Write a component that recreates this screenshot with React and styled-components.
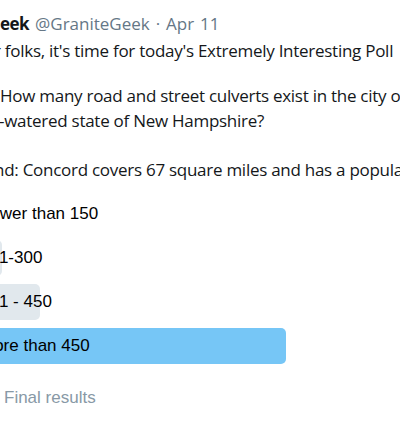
import React from "react";
import styled, { createGlobalStyle } from "styled-components";

const GlobalStyle = createGlobalStyle`
  html, body { margin: 0; padding: 0; background: #ffffff; }
  body { overflow: hidden; }
`;

const Frame = styled.div`
  width: 400px;
  height: 430px;
  overflow: hidden;
  background: #ffffff;
`;

const Tweet = styled.article`
  padding-top: 12px;
  font-family: "Open Sans", "Noto Sans", sans-serif;
  font-size: 17px;
  line-height: 24.5px;
  color: #14171a;
`;

const Line = styled.div`
  display: flex;
  white-space: nowrap;
  margin-left: ${(p) => p.$at}px;
`;

const Hidden = styled.span`
  flex: none;
  width: 200px;
  margin-left: -200px;
  text-align: right;
`;

const Header = styled(Line)`
  margin-bottom: 2.5px;
`;

const Name = styled.span`
  font-weight: 700;
  letter-spacing: -0.5px;
  color: #14171a;
`;

const Meta = styled.span`
  color: #657786;
  white-space: pre;
  word-spacing: 1.5px;
`;

const Body = styled.div`
  letter-spacing: -0.27px;
`;

const Para = styled.div`
  margin-bottom: ${(p) => p.$gap ?? 24.5}px;
  &:last-child { margin-bottom: 0; }
`;

const Poll = styled.div`
  margin-top: 14px;
  margin-left: -40px;
  width: 448px;
  font-family: "Liberation Sans", Arial, sans-serif;
  font-size: 17px;
  color: #000000;
  display: flex;
  flex-direction: column;
  gap: 8px;
`;

const Option = styled.div`
  position: relative;
  height: 36px;
  line-height: 36px;
  padding-left: 20px;
  white-space: nowrap;
`;

const Bar = styled.div`
  position: absolute;
  left: 0;
  top: 0;
  bottom: 0;
  border-radius: 5px;
  background: ${(p) => (p.$winner ? "#76c6f6" : "#e1e8ed")};
`;

const Label = styled.span`
  position: relative;
`;

const Footer = styled.div`
  margin-top: 24px;
  margin-left: 4px;
  font-family: "Liberation Sans", Arial, sans-serif;
  font-size: 17px;
  line-height: 20px;
  color: #8899a6;
`;

const options = [
  { label: "Fewer than 150", pct: 0 },
  { label: "151-300", pct: 9.4 },
  { label: "301 - 450", pct: 17.8 },
  { label: "More than 450", pct: 72.8, winner: true },
];

export default function App() {
  return (
    <Frame>
      <GlobalStyle />
      <Tweet>
        <Header $at={0}>
          <Hidden>
            <Name>Granite G</Name>
          </Hidden>
          <Name>eek</Name>
          <Meta> @GraniteGeek · Apr 11</Meta>
        </Header>
        <Body>
          <Para $gap={20.5}>
            <Line $at={-6}>
              <Hidden>Dea</Hidden>
              r folks, it's time for today's Extremely Interesting Poll
            </Line>
          </Para>
          <Para>
            <Line $at={0}>
              <Hidden>Q: </Hidden>
              How many road and street culverts exist in the city of Concord, capital
            </Line>
            <Line $at={-1}>
              <Hidden>of the well</Hidden>
              -watered state of New Hampshire?
            </Line>
          </Para>
          <Para>
            <Line $at={-6}>
              <Hidden>Backgrou</Hidden>
              nd: Concord covers 67 square miles and has a population of 43,000.
            </Line>
          </Para>
        </Body>
        <Poll>
          {options.map((o) => (
            <Option key={o.label}>
              {o.pct > 0 && <Bar $winner={o.winner} style={{ width: `${o.pct}%` }} />}
              <Label>{o.label}</Label>
            </Option>
          ))}
        </Poll>
        <Footer>Final results</Footer>
      </Tweet>
    </Frame>
  );
}
